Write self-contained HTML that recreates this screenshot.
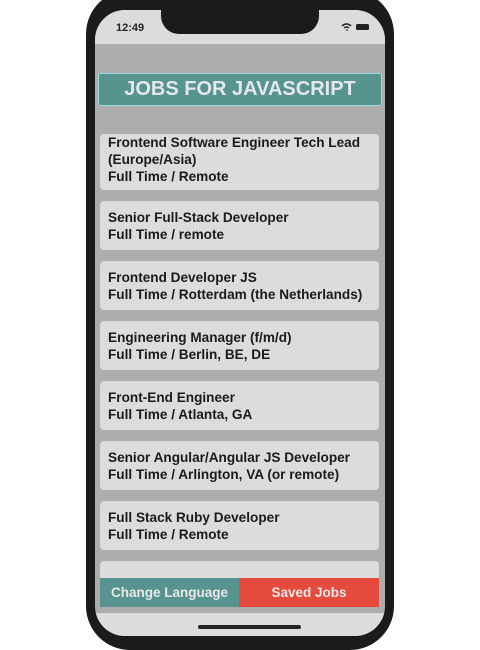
<!DOCTYPE html><html><head><style>
body{margin:0;width:480px;height:640px;background:#fff;position:relative;overflow:hidden;font-family:"Liberation Sans",sans-serif}
.phone{position:absolute;left:86px;top:-10px;width:308px;height:660px;background:#1b1b1c;border-radius:44px}
.screen{position:absolute;left:95px;top:10px;width:290px;height:626px;background:#adadad;border-radius:30px;overflow:hidden}
.status{position:absolute;left:0;top:0;width:290px;height:34px;background:#dcdcdc}
.notch{position:absolute;left:66px;top:0;width:158px;height:24px;background:#1b1b1c;border-radius:0 0 18px 18px}
.time{position:absolute;left:21px;top:12px;font-size:11px;font-weight:bold;color:#222}
.hdr{position:absolute;left:3px;top:63px;width:282px;height:31px;background:#58948f;border:1px solid #9dd;border-radius:3px;color:#e4e8ec;font-weight:bold;font-size:20px;text-align:center;line-height:31px}
.card{position:absolute;left:5px;width:279px;background:#dcdcdc;border-radius:4px;font-size:13.6px;font-weight:bold;color:#1a1a1a;line-height:17px;padding:0 8px;box-sizing:border-box;white-space:nowrap}
.bar{position:absolute;left:5px;top:568px;width:279px;height:29px;display:flex;font-weight:bold;font-size:13.5px;color:#e8e8e8;line-height:29px;text-align:center}
.bottom{position:absolute;left:0;top:603px;width:290px;height:30px;background:#dcdcdc}
.home{position:absolute;left:103px;top:615px;width:103px;height:4px;background:#222;border-radius:2px}
</style></head><body>
<div class="phone"></div>
<div class="screen">
<div class="status"></div><div class="notch"></div><div class="time">12:49</div>
<svg style="position:absolute;left:246px;top:13px" width="30" height="9"><path d="M1 3a6 6 0 0 1 9 0M3 5a3.5 3.5 0 0 1 5 0M5.5 7.5l1 -1" stroke="#222" stroke-width="1.5" fill="none"/><rect x="15" y="1" width="13" height="6" rx="1.5" fill="#222"/></svg>
<div class="hdr">JOBS FOR JAVASCRIPT</div>
<div class="card" style="top:124px;height:56px;padding-top:0">Frontend Software Engineer Tech Lead<br>(Europe/Asia)<br>Full Time / Remote</div>
<div class="card" style="top:191px;height:49px;padding-top:8px">Senior Full-Stack Developer<br>Full Time / remote</div>
<div class="card" style="top:251px;height:49px;padding-top:8px">Frontend Developer JS<br>Full Time / Rotterdam (the Netherlands)</div>
<div class="card" style="top:311px;height:49px;padding-top:8px">Engineering Manager (f/m/d)<br>Full Time / Berlin, BE, DE</div>
<div class="card" style="top:371px;height:49px;padding-top:8px">Front-End Engineer<br>Full Time / Atlanta, GA</div>
<div class="card" style="top:431px;height:49px;padding-top:8px">Senior Angular/Angular JS Developer<br>Full Time / Arlington, VA (or remote)</div>
<div class="card" style="top:491px;height:49px;padding-top:8px">Full Stack Ruby Developer<br>Full Time / Remote</div>
<div class="card" style="top:551px;height:20px"></div>
<div class="bar"><div style="width:139px;background:#58948f">Change Language</div><div style="width:140px;background:#e54b3c">Saved Jobs</div></div>
<div class="bottom"></div><div class="home"></div>
</div>
</body></html>
